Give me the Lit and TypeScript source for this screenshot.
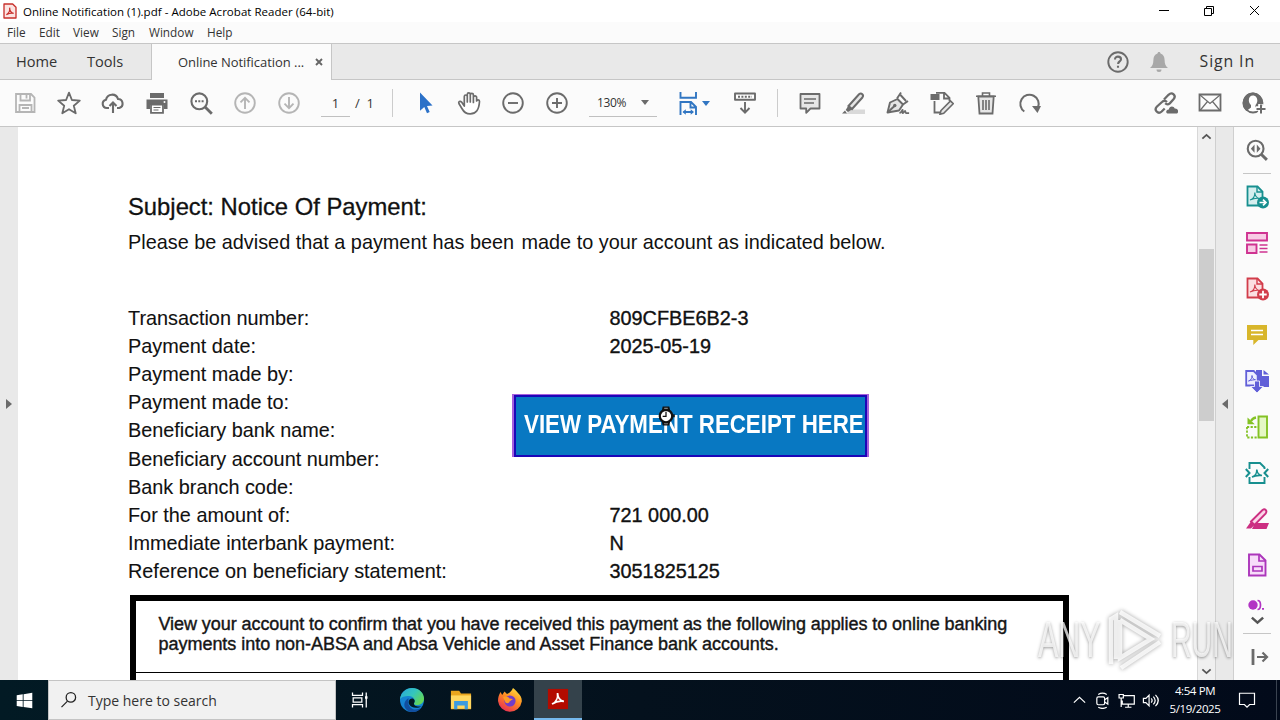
import { LitElement, html, css, svg, TemplateResult } from "lit";
import { customElement, property } from "lit/decorators.js";

const ICONS: Record<string, TemplateResult> = {
  acrobat: svg`
    <path d="M3 1.500h13l5 5v16H3z" fill="#fbe4e2" stroke="#c8302c" stroke-width="2" stroke-linejoin="round"/>
    <path d="M6.500 17.500c3-1.500 5.500-6 5-10.500 0 4 2 7.500 6 8.500-4-.8-7.500.3-11 2z" fill="none" stroke="#c8302c" stroke-width="1.800"/>`,
  save: svg`
    <g fill="none" stroke="#b5b5b5" stroke-width="1.800"><path d="M3 3h15l3.500 3.500V21H3z"/><path d="M7.500 3v6.500H17V3M13.500 4v3.500M6.500 21v-7h12v7M9 17h7"/></g>`,
  star: svg`<path d="M12 1.700l2.900 7.300 7.900.6-6 5.100 1.900 7.600L12 18.200l-6.700 4.100 1.900-7.600-6-5.100 7.900-.6z" fill="none" stroke="#6b6b6b" stroke-width="1.800" stroke-linejoin="round"/>`,
  cloud: svg`
    <path d="M8 17H5.800A4.200 4.200 0 0 1 5 8.700 6.200 6.200 0 0 1 17 8a4.600 4.600 0 0 1 1.300 9H16M12 22V11.500M8.500 15l3.500-3.600 3.500 3.600" fill="none" stroke="#6b6b6b" stroke-width="2.100"/>`,
  print: svg`
    <path d="M5 2h14v5H5zM1.500 8.500h21V18H19v-4H5v4H1.500z" fill="#6b6b6b"/><path d="M6 13.500h12v8.300H6z" fill="#fff" stroke="#6b6b6b" stroke-width="1.800"/><path d="M8.500 16.500h7M8.500 19h5" stroke="#6b6b6b" stroke-width="1.200"/><circle cx="19.500" cy="11" r="1" fill="#fff"/>`,
  find: svg`
    <circle cx="10.300" cy="10.300" r="7.900" fill="none" stroke="#6b6b6b" stroke-width="2.100"/><path d="M15.800 15.800l7 7" stroke="#6b6b6b" stroke-width="2.800"/><path d="M6 9.300h2v2H6zM9.300 9.300h2v2h-2zM12.600 9.300h2v2h-2z" fill="#6b6b6b"/>`,
  up: svg`<g fill="none" stroke="#b5b5b5" stroke-width="1.900"><circle cx="12" cy="12" r="9.800"/><path d="M12 18V7M7.500 11.300L12 6.800l4.500 4.500"/></g>`,
  down: svg`<g fill="none" stroke="#b5b5b5" stroke-width="1.900"><circle cx="12" cy="12" r="9.800"/><path d="M12 6v11M7.500 12.700l4.500 4.500 4.500-4.500"/></g>`,
  arrow: svg`<path d="M7 1.500v18.200l4.300-3.800 2.700 6.300 2.700-1.100-2.700-6.200 5.500-.4z" fill="#2b71c8"/>`,
  hand: svg`
    <path d="M7.300 15V5.500a1.500 1.500 0 0 1 3 0V11 3.400a1.500 1.500 0 0 1 3 0V11 4a1.500 1.500 0 0 1 3.100 0v7.500-5a1.500 1.500 0 0 1 3.200 0V10c.3-1.500 3-1.600 2.900.5-.2 3-.6 6.500-2.600 9.200-1.700 2.200-3.900 3.200-6.700 3.200-4.500 0-6.500-2-8.300-5.400L1.900 12.500c-.8-1.700 1.200-2.900 2.700-1.400z" fill="#fff" stroke="#6b6b6b" stroke-width="1.700" stroke-linejoin="round"/>`,
  minus: svg`<g fill="none" stroke="#6b6b6b" stroke-width="1.900"><circle cx="12" cy="12" r="9.800"/><path d="M7 12h10"/></g>`,
  plus: svg`<g fill="none" stroke="#6b6b6b" stroke-width="1.900"><circle cx="12" cy="12" r="9.800"/><path d="M7 12h10M12 7v10"/></g>`,
  fitwidth: svg`
    <g fill="none" stroke="#3176c2" stroke-width="1.900"><path d="M3.500 1v5.800H19V1M3.500 24V11H14l5 5v8M13.500 11v5.500H19M6.500 21h9"/></g><path d="M5.500 21l3.300-2.800v5.600zM17 21l-3.300-2.800v5.600z" fill="#3176c2"/>`,
  scroll: svg`
    <path d="M2 2.500h20v6.300H2z" fill="#fff" stroke="#6b6b6b" stroke-width="1.900" stroke-linejoin="round"/><path d="M5 5.700h14" stroke="#6b6b6b" stroke-width="1.900" stroke-dasharray="2 1.400"/><path d="M12 11v10.500M7.500 17l4.500 4.700 4.500-4.700" fill="none" stroke="#6b6b6b" stroke-width="1.900"/>`,
  comment: svg`
    <path d="M2.500 3h19v14.500h-9l-4.300 4.300v-4.300H2.500z" fill="#e6e6e6" stroke="#6b6b6b" stroke-width="1.800" stroke-linejoin="round"/><path d="M6 8h12M6 12h10" stroke="#6b6b6b" stroke-width="1.600"/>`,
  highlight: svg`
    <path d="M9 18.500h14V23H4z" fill="#d9d9d9"/><path d="M6.500 15L17 3.300c2.500-2 5.200.8 3.400 3.200L10 18z" fill="#e6e6e6" stroke="#6b6b6b" stroke-width="2"/><path d="M6.300 14.800L3.700 19l2.300 2 4.300-2.700zM3 19.500L0 22.500h5z" fill="#6b6b6b"/>`,
  sign: svg`
    <path d="M1.500 21.500L4 11.500 11.500 8l5.500 5.500-4 6z" fill="#e6e6e6" stroke="#6b6b6b" stroke-width="1.900" stroke-linejoin="round"/><path d="M1.500 21.500l7-6.500M11 7.500l4-6M17 13.500l5-3.500M14.500 4l5.500 6" fill="none" stroke="#6b6b6b" stroke-width="1.900"/><circle cx="8.800" cy="14.500" r="1.700" fill="#6b6b6b"/><path d="M13.500 22.300c2-1 3-4 3.200-3.500.3.800-1 3.400.2 3.400 1 0 1.400-2.400 2.200-2.400.6 0 .2 2.300 1 2.300h3" fill="none" stroke="#6b6b6b" stroke-width="1.700"/>`,
  edit: svg`
    <path d="M.5 3h9v6h-9z" fill="#6b6b6b"/><path d="M6 1.800h8.500l5 5V10M14 2v5.500h5.500M4.500 10v11.500h7" fill="none" stroke="#6b6b6b" stroke-width="1.800"/><path d="M11 19.500L20.500 10l2.700 2.700-9.500 9.500-3.700 1z" fill="#e6e6e6" stroke="#6b6b6b" stroke-width="1.600"/>`,
  trash: svg`
    <path d="M4.300 5.500h15.400L18.500 22.500h-13z" fill="#e6e6e6" stroke="#6b6b6b" stroke-width="1.800"/><path d="M2 5.300h20M8.500 5V2h7v3M9 9v10M12 9v10M15 9v10" fill="none" stroke="#6b6b6b" stroke-width="1.600"/>`,
  rotate: svg`<path d="M6.300 20.500A9.200 9.200 0 1 1 20 16.500" fill="none" stroke="#6b6b6b" stroke-width="2.100"/><path d="M14 15h9l-3.500 7z" fill="#6b6b6b"/>`,
  link: svg`
    <g fill="none" stroke="#6b6b6b" stroke-width="2.300"><path d="M10 8.500l4.500-4.700c3.700-3.500 8.200.7 5 4.500l-3.700 4c-1.500 1.300-3.400 1.200-4.600 0"/><path d="M13 11c-1.600-1.500-3.700-1.300-5 0L3 15.500c-3.500 3.500 1 8.300 4.700 5l3-3"/></g><path d="M13.500 22.500c-2.500-1-1-4.300 1.300-4.100.5-3.900 5.300-3.700 5.900-.8 3.500-.3 4.500 3.700 2.300 4.900z" fill="#6b6b6b"/>`,
  mail: svg`<g fill="none" stroke="#6b6b6b"><path d="M1.500 3.500h21v16h-21z" stroke-width="1.800"/><path d="M2 4l10 8.500L22 4M2 19.500l7.500-9M22 19.500l-7.500-9" stroke-width="1.200"/></g>`,
  user: svg`
    <circle cx="11" cy="12" r="9.500" fill="#fff" stroke="#6b6b6b" stroke-width="1.800"/><path d="M11 1.500A10.500 10.500 0 0 0 4.500 20l4.500-3.500V14C5 10 7 4.500 11 4.500s6 5.500 2.500 9.500v2l1.500 1 5-1A10.500 10.500 0 0 0 11 1.500z" fill="#6b6b6b"/><path d="M18.500 13v9M14 17.500h9" stroke="#fff" stroke-width="4.600"/><path d="M19 13.500v9M14.500 18h9" stroke="#6b6b6b" stroke-width="2"/>`,
  help: svg`<circle cx="12" cy="12" r="9.700" fill="none" stroke="#6b6b6b" stroke-width="1.900"/><path d="M9 9.500c0-4 6-3.600 6-.3 0 2.300-2.900 2.200-2.900 4.800M12 15.700v2" fill="none" stroke="#6b6b6b" stroke-width="2.100"/>`,
  bell: svg`<path d="M12 2c1 0 1.400.7 1.500 1.600 3 .9 4 3.400 4.100 6.400.1 4 .9 6 3.400 8H3c2.500-2 3.300-4 3.400-8 .1-3 1.100-5.500 4.100-6.400C10.600 2.700 11 2 12 2zM9.500 19.500h5a2.500 2.500 0 0 1-5 0z" fill="#a8a8a8"/>`,
  panelSearch: svg`
    <circle cx="10.500" cy="10.500" r="8.600" fill="none" stroke="#6b6b6b" stroke-width="2.300"/><path d="M16.300 16.300l6.500 6.500" stroke="#6b6b6b" stroke-width="3.200"/><path d="M9.300 6v9l-4-4.500zM11.800 6v9l4-4.500z" fill="#6b6b6b"/>`,
  exportPdf: svg`
    <path d="M2.500 1.500h10l5 5v14h-15z" fill="#d5eeee" stroke="#178f8f" stroke-width="1.800"/><path d="M12 1.500v5.500h5.500" fill="none" stroke="#178f8f" stroke-width="1.400"/><path d="M5 15c3-1 5-4 4.800-7.500.3 3.500 2 5.500 4.700 6-3-.5-6 0-9.500 1.500z" fill="none" stroke="#178f8f" stroke-width="1.100"/><circle cx="18" cy="17.500" r="6" fill="#178f8f"/><path d="M14.500 17.500h6M18 14.700l2.900 2.800-2.900 2.800" fill="none" stroke="#fff" stroke-width="1.700"/>`,
  organize: svg`
    <g fill="#f8cbe5" stroke="#cf3391" stroke-width="1.900"><path d="M2 2h20v7.500H2zM2 13.500h9.500V22H2z"/></g><path d="M14.500 14h8M14.500 17.500h8M14.500 21h8" stroke="#cf3391" stroke-width="1.300"/>`,
  createPdf: svg`
    <path d="M2.500 1.500h10l5 5v14h-15z" fill="#fbdfe1" stroke="#d23c4a" stroke-width="1.800"/><path d="M12 1.500v5.500h5.500" fill="none" stroke="#d23c4a" stroke-width="1.400"/><path d="M5 15c3-1 5-4 4.800-7.500.3 3.500 2 5.500 4.700 6-3-.5-6 0-9.500 1.500z" fill="none" stroke="#d23c4a" stroke-width="1.100"/><circle cx="18" cy="17.500" r="6" fill="#d23c4a"/><path d="M14.300 17.500h7.400M18 13.800v7.400" stroke="#fff" stroke-width="1.800"/>`,
  sticky: svg`<path d="M2 2h20v15h-8.500L8.300 22v-5H2z" fill="#d8b62b"/><path d="M6 7.500h12M6 11.500h12" stroke="#fff" stroke-width="1.700"/>`,
  combine: svg`
    <path d="M11 1h6v6h7v11H11z" fill="#615fd8"/><path d="M18.500 1L24 5.500h-5.500z" fill="#615fd8"/><path d="M1.200 2h7.500l4 4v10.500H1.200z" fill="#eeeeff" stroke="#615fd8" stroke-width="1.800"/><path d="M3.500 12c2.500-.8 3.600-3 3.500-5.500.2 2.500 1.300 4 3.500 4.300-2 0-4.500.3-7 1.200z" fill="none" stroke="#615fd8"/><path d="M9.500 12h5v5.500h3.800L12 24l-6.300-6.500h3.800z" fill="#615fd8" stroke="#fff" stroke-width=".8"/>`,
  compare: svg`
    <path d="M13.500 1.500H22v21h-8.500z" fill="#e5f7c5" stroke="#84c225" stroke-width="1.900"/><path d="M2 12v10.500h11M2 12h11" fill="none" stroke="#84c225" stroke-width="1.800" stroke-dasharray="2.200 1.400"/><path d="M11 2.500C8.500 3 7 4 6 6" fill="none" stroke="#84c225" stroke-width="2.300"/><path d="M2.500 2.500v6.700h7.300z" fill="#84c225"/>`,
  compress: svg`
    <path d="M4.500 8V2H15l4.500 4.500V8M4.500 16v6h15v-6" fill="none" stroke="#178f8f" stroke-width="1.900"/><path d="M7 16c3-.7 5-4 4.800-7.500.3 3.500 2 5.500 5.200 6-3-.3-7 0-10 1.500z" fill="none" stroke="#178f8f" stroke-width="1.600"/><path d="M.8 8l3.700 4-3.700 4M23.200 8l-3.700 4 3.700 4" fill="none" stroke="#178f8f" stroke-width="2"/>`,
  redact: svg`
    <path d="M10 16h14l-2.500 6H7z" fill="#cc2f82"/><path d="M6 14.500L17.500 3c2.500-1.700 5 .5 3.300 3.300L9.500 18z" fill="#fbd5e8" stroke="#cc2f82" stroke-width="1.900"/><path d="M6 14.500l3.500 3.500-3.500 3.500H1z" fill="#cc2f82"/>`,
  form: svg`
    <path d="M4 1.500h10.500l6 6v15H4z" fill="#f7dcf9" stroke="#ac36bb" stroke-width="1.900"/><path d="M14 1.500v6.500h6.500M8 13.500h9v4.500H8z" fill="none" stroke="#ac36bb" stroke-width="1.700"/>`,
  more: svg`<circle cx="8" cy="12" r="4.700" fill="#b234c4"/><path d="M12.500 7.500c4 0 4 9 0 9" fill="none" stroke="#b234c4" stroke-width="1.700"/><path d="M17 15h2v1.700h-2z" fill="#b234c4"/>`,
  collapse: svg`<path d="M3 4v16" stroke="#6b6b6b" stroke-width="2.800"/><path d="M7 12h9.500M12.500 7.500l4.500 4.500-4.500 4.500" fill="none" stroke="#6b6b6b" stroke-width="2.200"/>`,
  chevDown: svg`<path d="M3 7.500l9 8 9-8" fill="none" stroke="#555" stroke-width="4"/>`,
  chevUp: svg`<path d="M3 16.500l9-8 9 8" fill="none" stroke="#555" stroke-width="4"/>`,
  windows: svg`<path d="M1 4.500l8.500-1.300v8.300H1zM10.700 3L23 1.200v10.300H10.700zM1 12.700h8.500V21L1 19.800zM10.700 12.700H23V23l-12.300-1.800z" fill="#fff"/>`,
  search: svg`<circle cx="14.500" cy="8.500" r="6.300" fill="none" stroke="#222" stroke-width="1.700"/><path d="M10 13.500L2 21.500" stroke="#222" stroke-width="1.700"/>`,
  taskview: svg`<path d="M3 3v3.500h12V3M3 21v-3.500h12V21M3.800 9.500h10.400v5H3.800zM19.500 3v18" fill="none" stroke="#fff" stroke-width="1.500"/><path d="M18 7.500h3v3h-3z" fill="#fff"/>`,
  edge: svg`
    <defs>
      <linearGradient id="top" x1="0" y1="0" x2="1" y2=".6"><stop offset="0" stop-color="#2aa6dc"/><stop offset=".55" stop-color="#34c6bd"/><stop offset="1" stop-color="#63d657"/></linearGradient>
    </defs>
    <circle cx="12" cy="12" r="12" fill="#1584d2"/>
    <path d="M0 11.500C.7 4.500 6 0 12 0c7 0 12 5 12 10.500 0 4-3 6.500-6.800 6.500-2.700 0-3.500-1-3.200-1.800C16 12.500 13.500 8 9 8c-4.200 0-8 1-9 3.500z" fill="url(#top)"/>
    <path d="M8.500 12c-1.500 5 2.500 9.500 7 9.500 2.500 0 5-1 6.500-2.500-3.500 5.500-10 6-14 4C2.500 19.500 3.500 13 8.500 10z" fill="#114f9f"/>
    <path d="M14 15.200c1.700-2.200.3-4.700-2-4.700-2.500 0-4 2.800-3 5.500 1.300 3.500 8 5.500 13 2-3.500 1.200-8.500.3-8-2.800z" fill="#021a24"/>`,
  folder: svg`
    <path d="M1 2h9l2 3h11v17H1z" fill="#e9a51e"/><path d="M1 7h22v14.500H1z" fill="#ffd760"/><path d="M4.500 13h15v9h-3.500v-4H8v4H4.500z" fill="#3b9be0"/>`,
  firefox: svg`
    <defs><linearGradient id="fire" x1=".8" y1="0" x2=".2" y2="1"><stop offset="0" stop-color="#ffe23e"/><stop offset=".45" stop-color="#ff8a22"/><stop offset="1" stop-color="#e62757"/></linearGradient></defs>
    <path d="M15 0c3 2 3.500 3.500 5 5 2.500 2.300 4 5 3.800 8.500A12 12 0 0 1 0 13c0-3.500.8-6 2.500-9l1.700 3L6.500 3.500 9 6c2-.5 4.500-2.500 6-6z" fill="url(#fire)"/>
    <circle cx="12" cy="13" r="5.600" fill="#713cc9"/><path d="M5 9c3-1 5-.5 6.500 1.500L15 11l-3.500 2.500c0 2-3 2-4 1z" fill="#ff9b24"/>`,
  acrobatApp: svg`
    <path d="M1 1h22v22H1z" fill="#b30b00"/><path d="M5.500 17.500c4-1.800 6.700-6.500 6-12 .3 5 2.700 8.500 7 9.200-4.500-.8-9.300.5-13 2.800z" fill="none" stroke="#fff" stroke-width="1.900"/>`,
  trayUp: svg`<path d="M3 15.500L12 7l9 8.500" fill="none" stroke="#fff" stroke-width="1.900"/>`,
  camera: svg`<g fill="none" stroke="#fff" stroke-width="1.700"><rect x="4" y="7" width="11" height="11" rx="2"/><path d="M15 11l4.500-3v9L15 14M6 3.500c4-2.500 8-2.500 12 0M6 21.500c4 2.300 8 2.300 12 0"/></g>`,
  network: svg`<g fill="none" stroke="#fff" stroke-width="1.700"><path d="M8 5h15v12H6v-5M14.500 17v4M10 21.500h9M1.500 3.500h6v5h-6zM4.500 8.500V21"/></g>`,
  volume: svg`<g fill="none" stroke="#fff" stroke-width="1.700"><path d="M2 9h3.500L10 4.500v15L5.500 15H2zM13 9c1.700 2 1.700 4 0 6M16 6.500c3.300 3.500 3.300 7.500 0 11M19 4c5 5 5 11 0 16"/></g>`,
  notify: svg`<path d="M2 3h20v15h-6.500L12 21.500 8.500 18H2z" fill="none" stroke="#fff" stroke-width="1.600"/>`,
  watch: svg`
    <path d="M8 .5h8l1 5H7zM7 18.500h10l-1 5H8z" fill="#111"/><path d="M10 2h4v2h-4zM10 20h4v2h-4z" fill="#999"/><circle cx="12" cy="12" r="7.500" fill="#fff" stroke="#111" stroke-width="2.700"/><path d="M12 7v5.500H8" fill="none" stroke="#111" stroke-width="1.500"/><path d="M20.500 10h2v3.500h-2z" fill="#111"/>`,
};

@customElement("ui-icon")
class UiIcon extends LitElement {
  @property() name = "";
  @property({ type: Number }) size = 24;

  render() {
    return html`<svg width=${this.size} height=${this.size} viewBox="0 0 24 24">${ICONS[this.name]}</svg>`;
  }

  static styles = css`
    :host {
      display: block;
      flex: none;
    }
    svg {
      display: block;
    }
  `;
}

const DETAILS = [
  ["Transaction number:", "809CFBE6B2-3"],
  ["Payment date:", "2025-05-19"],
  ["Payment made by:", ""],
  ["Payment made to:", ""],
  ["Beneficiary bank name:", ""],
  ["Beneficiary account number:", ""],
  ["Bank branch code:", ""],
  ["For the amount of:", "721 000.00"],
  ["Immediate interbank payment:", "N"],
  ["Reference on beneficiary statement:", "3051825125"],
];

const PANEL_TOOLS = ["exportPdf", "organize", "createPdf", "sticky", "combine", "compare", "compress", "redact", "form"];

@customElement("app-root")
class AppRoot extends LitElement {
  private icons(names: string[]) {
    return names.map((name) => html`<ui-icon name=${name}></ui-icon>`);
  }

  private renderHeader() {
    return html`
      <div class="titlebar">
        <ui-icon name="acrobat" size="16"></ui-icon>
        <span class="title">Online Notification (1).pdf - Adobe Acrobat Reader (64-bit)</span>
        <svg class="window-buttons" width="110" height="22" viewBox="0 0 110 22">
          <path
            d="M5 10.500h10M50.500 8.500h7v7h-7zM52.500 8.500v-2h7v7h-2M96 6l9 9M105 6l-9 9"
            fill="none"
            stroke="#000"
          />
        </svg>
      </div>
      <div class="menubar">
        <span class="file">File</span><span class="edit">Edit</span><span class="view">View</span
        ><span class="sign">Sign</span><span class="window">Window</span><span>Help</span>
      </div>
      <div class="tabs">
        <span class="home">Home</span><span class="tools">Tools</span>
        <div class="tab">
          <span>Online Notification ...</span>
          <svg width="8" height="8" viewBox="0 0 8 8"><path d="M1 1l6 6M7 1L1 7" stroke="#666" stroke-width="1.900" /></svg>
        </div>
        <div class="account">
          <ui-icon name="help"></ui-icon>
          <ui-icon name="bell"></ui-icon>
          <span>Sign In</span>
        </div>
      </div>
    `;
  }

  private renderToolbar() {
    return html`
      <div class="toolbar">
        <div class="group">${this.icons(["save", "star", "cloud", "print", "find", "up", "down"])}</div>
        <span class="page-field">1</span>
        <span class="page-total">/&nbsp; 1</span>
        <i class="separator"></i>
        <div class="group nav">${this.icons(["arrow", "hand", "minus", "plus"])}</div>
        <div class="zoom"><span>130%</span><i class="caret"></i></div>
        <div class="fit"><ui-icon name="fitwidth"></ui-icon><i class="caret blue"></i></div>
        <ui-icon name="scroll"></ui-icon>
        <i class="separator second"></i>
        <div class="group">${this.icons(["comment", "highlight", "sign", "edit", "trash", "rotate"])}</div>
        <div class="group share">${this.icons(["link", "mail", "user"])}</div>
      </div>
    `;
  }

  private renderPage() {
    return html`
      <div class="page">
        <h1>Subject: Notice Of Payment:</h1>
        <p class="intro"><span class="intro-start">Please be advised that a payment has been</span><span>made to your account as indicated below.</span></p>
        <div class="details">
          ${DETAILS.map(([label, value]) => html`<span>${label}</span><span class="value">${value}</span>`)}
        </div>
        <div class="notice">
          <p>
            <span class="line-one">View your account to confirm that you have received this payment as the following applies to online banking</span><br />
            <span class="line-two">payments into non-ABSA and Absa Vehicle and Asset Finance bank accounts.</span>
          </p>
        </div>
        <div class="receipt"><span>VIEW PAYMENT RECEIPT HERE</span></div>
        <ui-icon class="cursor" name="watch" size="20"></ui-icon>
      </div>
    `;
  }

  private renderPanel() {
    return html`
      <div class="panel">
        <ui-icon name="panelSearch" size="22"></ui-icon>
        <i class="rule"></i>
        <div class="panel-tools">${this.icons(PANEL_TOOLS)}</div>
        <ui-icon class="more" name="more"></ui-icon>
        <ui-icon name="chevDown" size="15"></ui-icon>
        <i class="rule bottom"></i>
        <ui-icon class="collapse" name="collapse"></ui-icon>
      </div>
    `;
  }

  private renderTaskbar() {
    return html`
      <div class="taskbar">
        <div class="start"><ui-icon name="windows" size="17"></ui-icon></div>
        <div class="search"><ui-icon name="search" size="18"></ui-icon><span>Type here to search</span></div>
        <div class="app taskview"><ui-icon name="taskview" size="20"></ui-icon></div>
        <div class="app"><ui-icon name="edge"></ui-icon></div>
        <div class="app"><ui-icon name="folder" size="22"></ui-icon></div>
        <div class="app"><ui-icon name="firefox"></ui-icon></div>
        <div class="app active"><ui-icon name="acrobatApp" size="22"></ui-icon></div>
        <div class="tray">
          <ui-icon name="trayUp" size="15"></ui-icon>
          <ui-icon name="camera" size="17"></ui-icon>
          <ui-icon name="network" size="17"></ui-icon>
          <ui-icon name="volume" size="17"></ui-icon>
          <div class="clock"><span>4:54 PM</span><span>5/19/2025</span></div>
          <ui-icon name="notify" size="18"></ui-icon>
        </div>
        <i class="show-desktop"></i>
      </div>
    `;
  }

  render() {
    return html`
      ${this.renderHeader()} ${this.renderToolbar()}
      <div class="workspace">
        <div class="left-strip"><i class="tri right"></i></div>
        ${this.renderPage()}
        <div class="scrollbar">
          <ui-icon name="chevUp" size="11"></ui-icon>
          <i class="thumb"></i>
          <ui-icon name="chevDown" size="11"></ui-icon>
        </div>
        <div class="right-strip"><i class="tri left"></i></div>
        ${this.renderPanel()}
      </div>
      ${this.renderTaskbar()}
      <div class="watermark">
        <span>ANY</span>
        <svg width="60" height="66" viewBox="0 0 60 66">
          <path d="M6 57V12l5-3v43M15 5l40 24M15 13v38l31-19L15 13M16 61l39-26" />
        </svg>
        <span class="run">RUN</span>
      </div>
    `;
  }

  static styles = css`
    :host {
      display: flex;
      flex-direction: column;
      position: relative;
      width: 1280px;
      height: 720px;
      overflow: hidden;
      font-family: "Open Sans", "Noto Sans", sans-serif;
      color: #333;
      white-space: nowrap;
    }
    * {
      box-sizing: border-box;
    }
    .titlebar {
      display: flex;
      align-items: center;
      height: 22px;
      padding-left: 2px;
      gap: 5px;
      background: #fff;
      color: #000;
      font-size: 11.500px;
    }
    .title {
      letter-spacing: 0.03px;
    }
    .window-buttons {
      margin-left: auto;
      margin-right: 16px;
    }
    .menubar {
      display: flex;
      height: 21px;
      padding-left: 7px;
      line-height: 21px;
      font-size: 11.800px;
      background: #fbfbfb;
    }
    .menubar .file {
      width: 32px;
    }
    .menubar .edit {
      width: 34px;
    }
    .menubar .view {
      width: 39px;
    }
    .menubar .sign {
      width: 37px;
    }
    .menubar .window {
      width: 58px;
    }
    .tabs {
      display: flex;
      height: 37px;
      border-top: 1px solid #c6c6c6;
      border-bottom: 1px solid #c6c6c6;
      background: #e9e9e9;
      font-size: 14.600px;
      line-height: 35px;
    }
    .home {
      width: 87px;
      padding-left: 16px;
    }
    .tools {
      width: 64px;
    }
    .tab {
      display: flex;
      align-items: center;
      justify-content: space-between;
      width: 181px;
      height: 36px;
      padding: 0 8px 0 26px;
      border-left: 1px solid #c6c6c6;
      border-right: 1px solid #c6c6c6;
      background: #fbfbfb;
      font-size: 13px;
      letter-spacing: -0.05px;
    }
    .account {
      display: flex;
      align-items: center;
      gap: 17px;
      margin-left: auto;
      margin-right: 25px;
      font-size: 15.800px;
    }
    .account span {
      margin-left: 12px;
      letter-spacing: 0.900px;
    }
    .toolbar {
      display: flex;
      align-items: center;
      flex: none;
      height: 47px;
      padding: 0 14px 0 13px;
      border-bottom: 1px solid #c6c6c6;
      background: #fbfbfb;
      font-size: 13px;
    }
    .group {
      display: flex;
      gap: 20px;
    }
    .page-field {
      width: 29px;
      height: 28px;
      margin-left: 20px;
      border-bottom: 1px solid #c0c0c0;
      line-height: 28px;
      text-align: center;
    }
    .page-total {
      width: 36px;
      margin-left: 5px;
    }
    .separator {
      width: 1px;
      height: 28px;
      margin-left: 1px;
      background: #ccc;
    }
    .nav {
      margin-left: 20px;
    }
    .zoom {
      display: flex;
      align-items: center;
      justify-content: space-between;
      width: 68px;
      height: 28px;
      margin-left: 20px;
      padding: 0 8px;
      border-bottom: 1px solid #c0c0c0;
      font-size: 12px;
      letter-spacing: -0.400px;
    }
    .caret {
      border: 4px solid transparent;
      border-top: 5px solid #6b6b6b;
      border-bottom: 0;
    }
    .caret.blue {
      margin-left: 1px;
      border-top-color: #3176c2;
    }
    .fit {
      display: flex;
      align-items: center;
      width: 56px;
      margin-left: 20px;
    }
    .separator.second {
      margin: 0 20px;
    }
    .share {
      margin-left: auto;
    }
    .workspace {
      display: flex;
      height: 553px;
      background: #fff;
    }
    .left-strip,
    .right-strip {
      display: flex;
      align-items: center;
      justify-content: center;
      width: 18px;
      background: #e9e9e9;
    }
    .right-strip {
      width: 19px;
      border-left: 1px solid #cfcfcf;
      border-right: 1px solid #cfcfcf;
    }
    .tri {
      border: 5px solid transparent;
    }
    .tri.right {
      border-left: 6px solid #6b6b6b;
      border-right: 0;
    }
    .tri.left {
      border-right: 6px solid #6b6b6b;
      border-left: 0;
    }
    .page {
      position: relative;
      width: 1179px;
      height: 553px;
      padding: 66px 0 0 110px;
      overflow: hidden;
      background: #fff;
      color: #111;
      font: 19.850px "Liberation Sans", Arial, sans-serif;
    }
    h1 {
      height: 28px;
      margin: 0;
      font-size: 23.800px;
      font-weight: 400;
      line-height: 28px;
      -webkit-text-stroke: 0.3px #111;
    }
    .intro {
      display: flex;
      height: 28px;
      margin: 7px 0 0;
      line-height: 28px;
    }
    .intro-start {
      width: 393.500px;
    }
    .details {
      display: grid;
      grid-template-columns: 481.500px 1fr;
      grid-auto-rows: 28.110px;
      margin-top: 48px;
      line-height: 28px;
      -webkit-text-stroke: 0.1px #111;
    }
    .value {
      -webkit-text-stroke: 0.35px #111;
    }
    .notice {
      width: 939px;
      height: 120px;
      margin: 10px 0 0 2px;
      border: 6px solid #000;
      color: #151515;
      font-size: 18px;
      line-height: 20px;
      -webkit-text-stroke: 0.4px #151515;
    }
    .notice p {
      height: 72px;
      margin: 0;
      padding: 13px 0 0 22.500px;
      border-bottom: 1px solid #000;
    }
    .line-one {
      letter-spacing: -0.07px;
    }
    .line-two {
      letter-spacing: -0.03px;
    }
    .receipt {
      position: absolute;
      left: 494px;
      top: 267px;
      display: flex;
      align-items: center;
      width: 357px;
      height: 63px;
      padding: 0 0 3px 10px;
      border: 2px solid #a55fdc;
      border-top-width: 1px;
      border-bottom: 0;
      box-shadow: inset 0 0 0 2px #1c06b8;
      background: #0878c2;
      color: #fff;
      font-size: 26px;
      font-weight: 700;
    }
    .receipt span {
      transform: scaleX(0.858);
      transform-origin: left;
    }
    .cursor {
      position: absolute;
      left: 638px;
      top: 279px;
    }
    .scrollbar {
      display: flex;
      flex-direction: column;
      align-items: center;
      justify-content: space-between;
      width: 18px;
      padding: 4px 0 3px;
      border-left: 1px solid #d8d8d8;
      background: #f0f0f0;
    }
    .thumb {
      width: 15px;
      height: 172px;
      margin-bottom: 138px;
      background: #cdcdcd;
    }
    .panel {
      display: flex;
      flex-direction: column;
      align-items: center;
      width: 46px;
      padding-top: 12px;
      background: #fbfbfb;
    }
    .rule {
      width: 28px;
      height: 1px;
      flex: none;
      margin: 12px 0 11px;
      background: #c6c6c6;
    }
    .panel-tools {
      display: flex;
      flex-direction: column;
      gap: 22px;
    }
    .more {
      height: 15px;
      margin: 16px 0 5px;
    }
    .rule.bottom {
      margin: 5px 0 11px;
    }
    .collapse {
      margin-left: 10px;
    }
    .taskbar {
      display: flex;
      height: 40px;
      background: linear-gradient(90deg, #021a24, #04111d 50%, #020a1a);
      color: #fff;
    }
    .start,
    .app {
      display: flex;
      align-items: center;
      justify-content: center;
      width: 48px;
      height: 40px;
    }
    .app {
      width: 49px;
    }
    .app.taskview {
      width: 51px;
      padding-right: 3px;
    }
    .app.active {
      width: 48px;
      border-bottom: 2px solid #76b9ed;
      background: #34424b;
    }
    .search {
      display: flex;
      align-items: center;
      gap: 10px;
      width: 288px;
      padding-left: 11px;
      border: 1px solid #c4c4c4;
      background: #f1f1f1;
      color: #333;
      font-size: 14px;
    }
    .tray {
      display: flex;
      align-items: center;
      gap: 7px;
      margin-left: auto;
      margin-right: 20px;
    }
    .clock {
      display: flex;
      flex-direction: column;
      align-items: center;
      width: 58px;
      margin-right: 7px;
      font-size: 11.500px;
      line-height: 18px;
      letter-spacing: -0.400px;
    }
    .show-desktop {
      width: 4px;
      border-left: 1px solid #3a4350;
    }
    .watermark {
      position: absolute;
      left: 1038px;
      top: 607px;
      display: flex;
      align-items: center;
      width: 196px;
      height: 66px;
      color: rgba(255, 255, 255, 0.75);
      font: 50px "Liberation Sans", sans-serif;
      text-shadow: 0 1px 4px rgba(0, 0, 0, 0.4);
    }
    .watermark span {
      width: 67px;
      flex: none;
      transform: scaleX(0.61);
      transform-origin: left;
    }
    .watermark .run {
      transform: scaleX(0.57);
    }
    .watermark svg {
      flex: none;
      margin-right: 6px;
      fill: none;
      stroke: rgba(255, 255, 255, 0.8);
      stroke-width: 4.500;
      filter: drop-shadow(0 0 2px rgba(0, 0, 0, 0.45));
    }
  `;
}

declare global {
  interface HTMLElementTagNameMap {
    "app-root": AppRoot;
    "ui-icon": UiIcon;
  }
}
